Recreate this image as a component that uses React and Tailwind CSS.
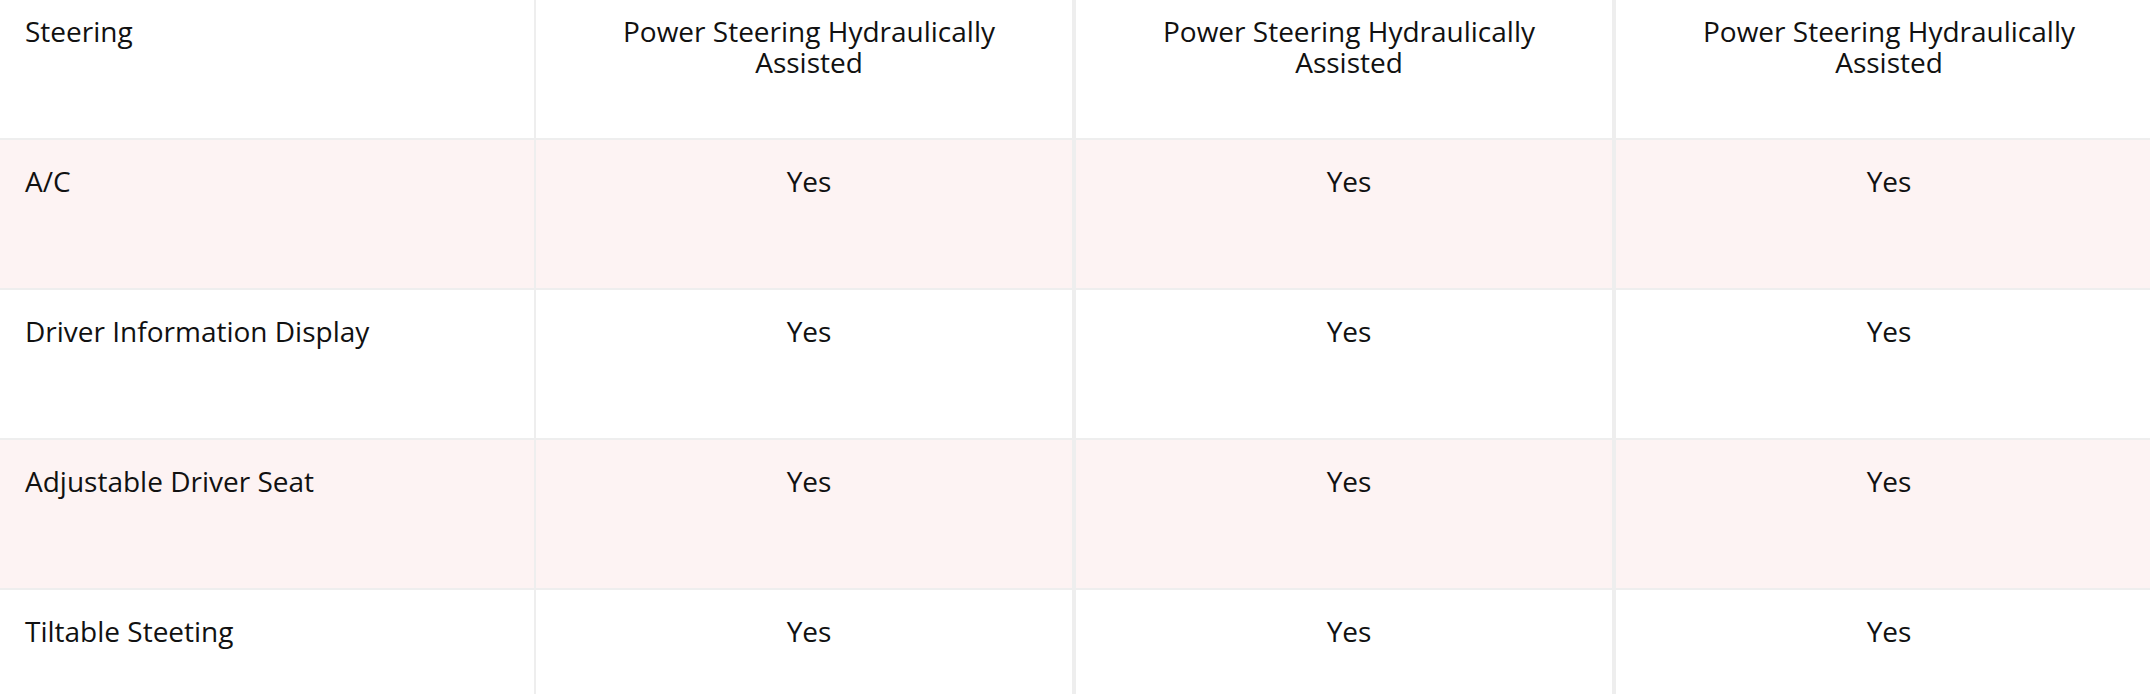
const COLS = [
  'Power Steering Hydraulically Assisted',
  'Power Steering Hydraulically Assisted',
  'Power Steering Hydraulically Assisted',
]

const ROWS = [
  { label: 'A/C', values: ['Yes', 'Yes', 'Yes'] },
  { label: 'Driver Information Display', values: ['Yes', 'Yes', 'Yes'] },
  { label: 'Adjustable Driver Seat', values: ['Yes', 'Yes', 'Yes'] },
  { label: 'Tiltable Steeting', values: ['Yes', 'Yes', 'Yes'] },
]

export default function App() {
  return (
    <div className="w-[2150px] h-[694px] overflow-hidden bg-white text-[28px] leading-[31px] text-[#111111] font-['Open_Sans',sans-serif]">
      {/* header row */}
      <div className="grid grid-cols-[534px_540px_540px_540px] h-[140px] border-b-2 border-[#eeeeee] bg-white">
        <div className="pl-[25px] pr-4 pt-[16px]">Steering</div>
        {COLS.map((c, i) => (
          <div key={i} className="border-x-2 border-[#eeeeee] pt-[16px] pl-[36px] pr-[26px] text-center">
            {c}
          </div>
        ))}
      </div>
      {ROWS.map((r, i) => (
        <div key={i} className={`grid grid-cols-[534px_540px_540px_540px] h-[150px] border-b-2 border-[#eeeeee] ${i % 2 === 0 ? 'bg-[#fdf3f3]' : 'bg-white'}`}>
          <div className="pl-[25px] pr-4 pt-[26px]">{r.label}</div>
          {r.values.map((v, j) => (
            <div key={j} className="border-x-2 border-[#eeeeee] pt-[26px] pl-[36px] pr-[26px] text-center">
              {v}
            </div>
          ))}
        </div>
      ))}
    </div>
  )
}
